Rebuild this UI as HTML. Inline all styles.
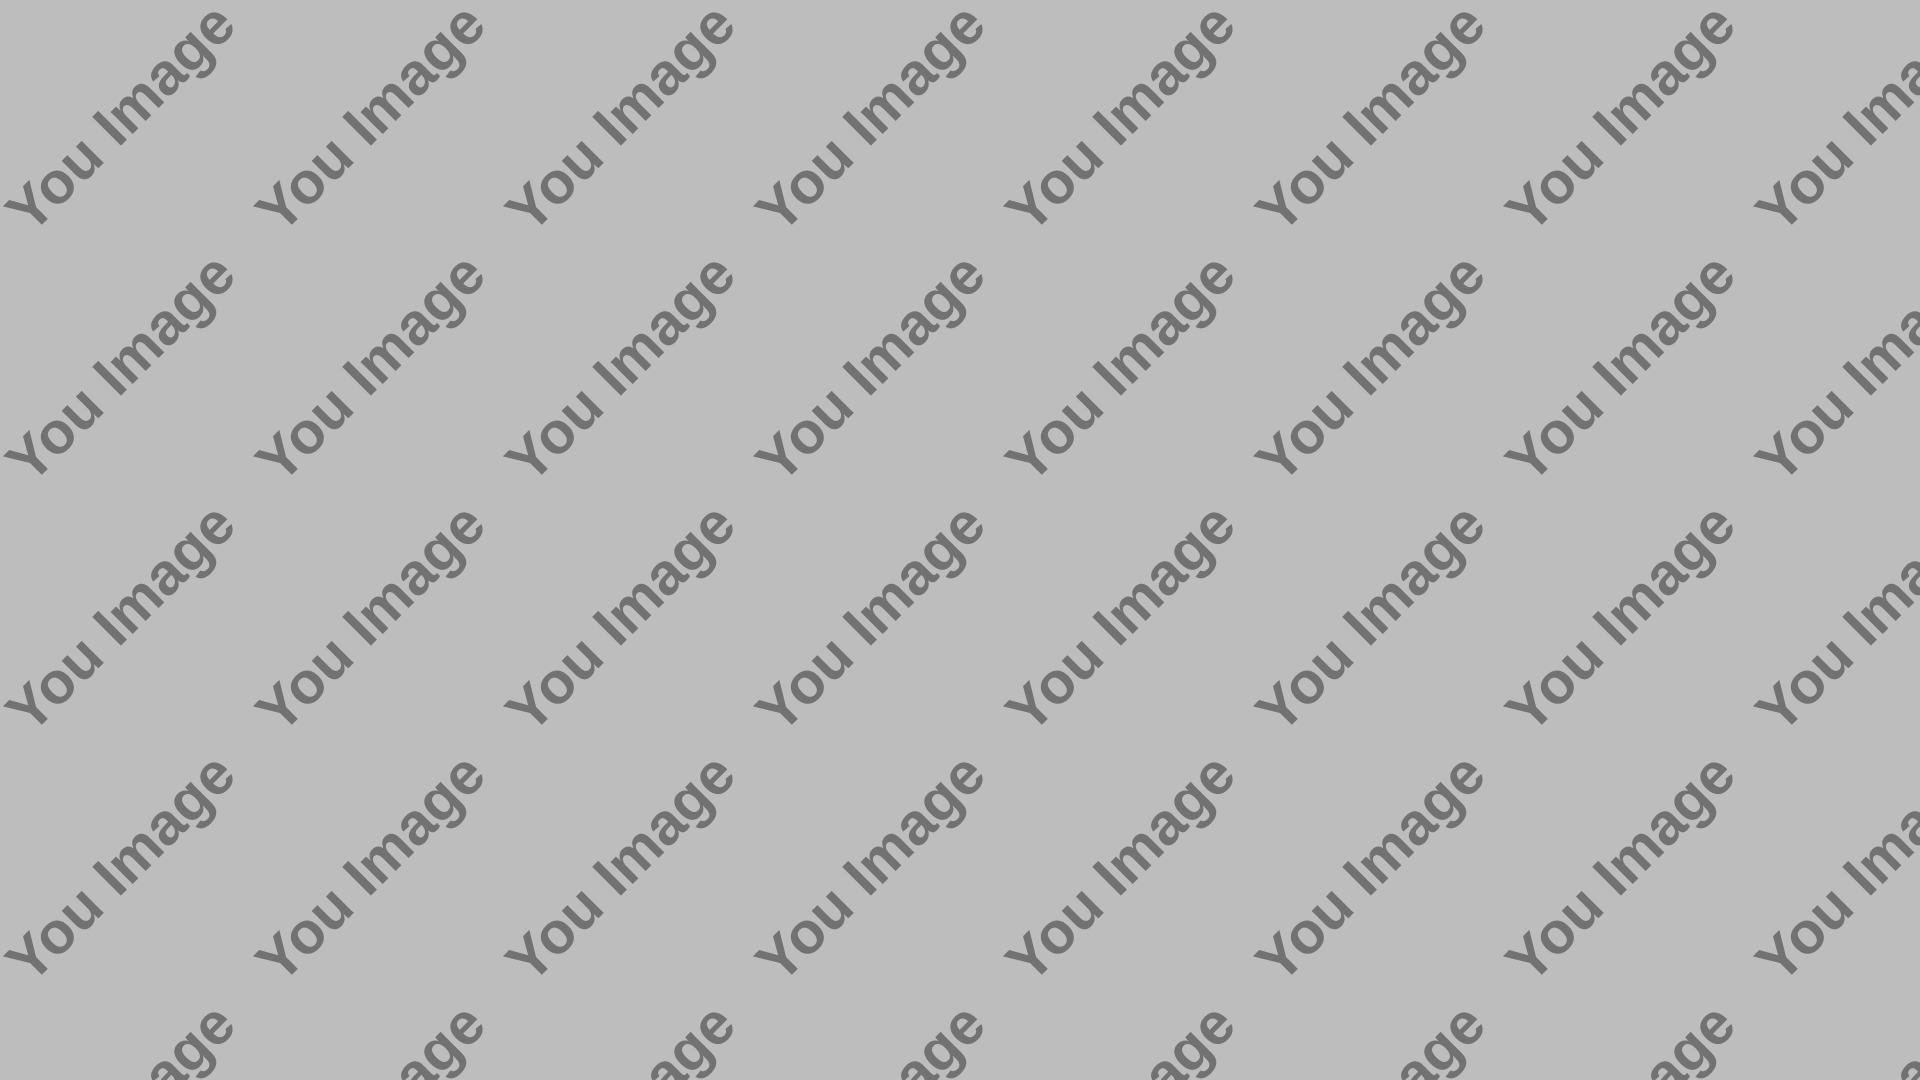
<!DOCTYPE html>
<html><head><style>
html,body{margin:0;padding:0;width:1920px;height:1080px;overflow:hidden;background:#bdbdbd;}
#w{position:relative;width:1920px;height:1080px;overflow:hidden;}
.t{position:absolute;width:0;height:0;}
.t span{position:absolute;left:0;top:0;transform:translate(-50%,-50%) rotate(-45deg);font:bold 59px/1 "Liberation Sans",sans-serif;color:#727272;white-space:nowrap;}
</style></head><body><div id="w">
<script>
for(let r=0;r<5;r++)for(let c=0;c<8;c++){
document.write('<div class="t" style="left:'+(121+c*250)+'px;top:'+(118+r*250)+'px"><span>You Image</span></div>');
}
</script>
</div></body></html>
